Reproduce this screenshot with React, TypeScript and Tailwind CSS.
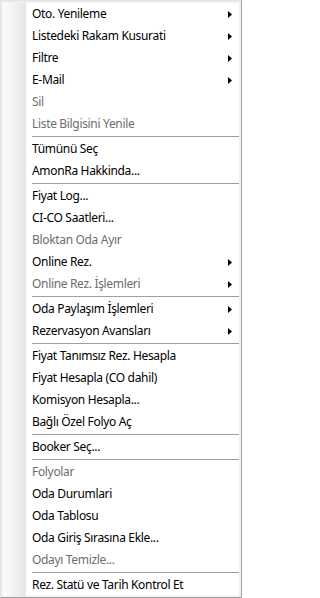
import React from "react";

type Row =
  | { kind: "item"; label: string; disabled?: boolean; sub?: boolean }
  | { kind: "sep" };

const rows: Row[] = [
  { kind: "item", label: "Oto. Yenileme", sub: true },
  { kind: "item", label: "Listedeki Rakam Kusurati", sub: true },
  { kind: "item", label: "Filtre", sub: true },
  { kind: "item", label: "E-Mail", sub: true },
  { kind: "item", label: "Sil", disabled: true },
  { kind: "item", label: "Liste Bilgisini Yenile", disabled: true },
  { kind: "sep" },
  { kind: "item", label: "Tümünü Seç" },
  { kind: "item", label: "AmonRa Hakkinda..." },
  { kind: "sep" },
  { kind: "item", label: "Fiyat Log..." },
  { kind: "item", label: "CI-CO Saatleri..." },
  { kind: "item", label: "Bloktan Oda Ayır", disabled: true },
  { kind: "item", label: "Online Rez.", sub: true },
  { kind: "item", label: "Online Rez. İşlemleri", disabled: true, sub: true },
  { kind: "sep" },
  { kind: "item", label: "Oda Paylaşım İşlemleri", sub: true },
  { kind: "item", label: "Rezervasyon Avansları", sub: true },
  { kind: "sep" },
  { kind: "item", label: "Fiyat Tanımsız Rez. Hesapla" },
  { kind: "item", label: "Fiyat Hesapla (CO dahil)" },
  { kind: "item", label: "Komisyon Hesapla..." },
  { kind: "item", label: "Bağlı Özel Folyo Aç" },
  { kind: "sep" },
  { kind: "item", label: "Booker Seç..." },
  { kind: "sep" },
  { kind: "item", label: "Folyolar", disabled: true },
  { kind: "item", label: "Oda Durumlari" },
  { kind: "item", label: "Oda Tablosu" },
  { kind: "item", label: "Oda Giriş Sırasına Ekle..." },
  { kind: "item", label: "Odayı Temizle...", disabled: true },
  { kind: "sep" },
  { kind: "item", label: "Rez. Statü ve Tarih Kontrol Et" },
];

function Arrow() {
  return (
    <svg width="4" height="7" viewBox="0 0 4 7" className="ml-auto shrink-0">
      <path d="M0 0 L4 3.5 L0 7 Z" fill="#000" />
    </svg>
  );
}

export default function App() {
  return (
    <div
      className="w-[242px] h-[598px] bg-[#f0f0f0] border border-t-[#e3e3e3] border-l-[#e3e3e3] border-r-[#a0a0a0] border-b-[#a0a0a0] pt-[2px] pl-[2px] pr-[2px] pb-[1px] flex text-[12px] leading-none tracking-[-0.33px]"
      style={{ fontFamily: '"Segoe UI", "Noto Sans", sans-serif' }}
    >
      <div className="w-[23px] shrink-0 bg-gradient-to-r from-[#fdfdfd] to-[#e6e6e6]" />
      <div className="flex-1 bg-white flex flex-col">
        {rows.map((r, i) =>
          r.kind === "sep" ? (
            <div key={i} className="h-[3px] pl-[6px] flex items-center">
              <div className="h-px w-full bg-[#a0a0a0]" />
            </div>
          ) : (
            <div
              key={i}
              className={`h-[22px] shrink-0 flex items-center pl-[6px] pr-[7px] ${
                r.disabled ? "text-[#6d6d6d]" : "text-black"
              }`}
            >
              <span className="whitespace-nowrap">{r.label}</span>
              {r.sub && <Arrow />}
            </div>
          )
        )}
      </div>
    </div>
  );
}
